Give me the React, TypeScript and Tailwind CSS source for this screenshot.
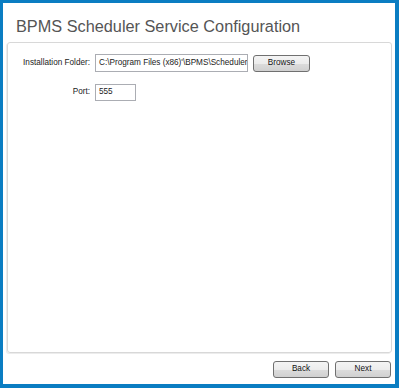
const WinButton = ({ label, className }: { label: string; className: string }) => {
  return (
    <button
      className={`flex items-center justify-center rounded-[3px] border border-[#707070] bg-[linear-gradient(#f4f4f4_0%,#ececec_50%,#dcdcdc_51%,#d0d0d0_100%)] text-[8.2px] text-[#111] ${className}`}
    >
      {label}
    </button>
  );
};

const App = () => {
  return (
    <div
      className="flex h-[388px] w-[399px] flex-col border-t-[3px] border-l-[3px] border-r-[4px] border-b-[4px] border-[#0a7dc2] bg-white"
      style={{ fontFamily: '"Liberation Sans", Arial, sans-serif' }}
    >
      <h1 className="pl-[13px] pt-[13px] text-[16.3px] leading-[20px] text-[#555555]">
        BPMS Scheduler Service Configuration
      </h1>
      <div className="ml-[4px] mr-[3px] mt-[6px] h-[311px] rounded-[3px] border border-[#d8d8d8] shadow-[-1px_1px_0_#ececec] pt-[11px]">
        <div className="grid grid-cols-[82px_1fr] items-center gap-x-[5px] gap-y-[12px] text-[8.2px] text-[#222]">
          <span className="text-right">Installation Folder:</span>
          <div className="flex items-center gap-[5px]">
            <div className="flex h-[18px] w-[153px] items-center overflow-hidden whitespace-nowrap border border-[#abadb3] pl-[3px]">
              C:\Program Files (x86)'\BPMS\Scheduler
            </div>
            <WinButton label="Browse" className="h-[17px] w-[57px]" />
          </div>
          <span className="text-right">Port:</span>
          <div className="flex h-[17px] w-[41px] items-center border border-[#abadb3] pl-[3px]">
            555
          </div>
        </div>
      </div>
      <div className="mr-[4px] mt-[8px] flex justify-end gap-[6px]">
        <WinButton label="Back" className="h-[17px] w-[56px]" />
        <WinButton label="Next" className="h-[17px] w-[56px]" />
      </div>
    </div>
  );
};

export default App;
